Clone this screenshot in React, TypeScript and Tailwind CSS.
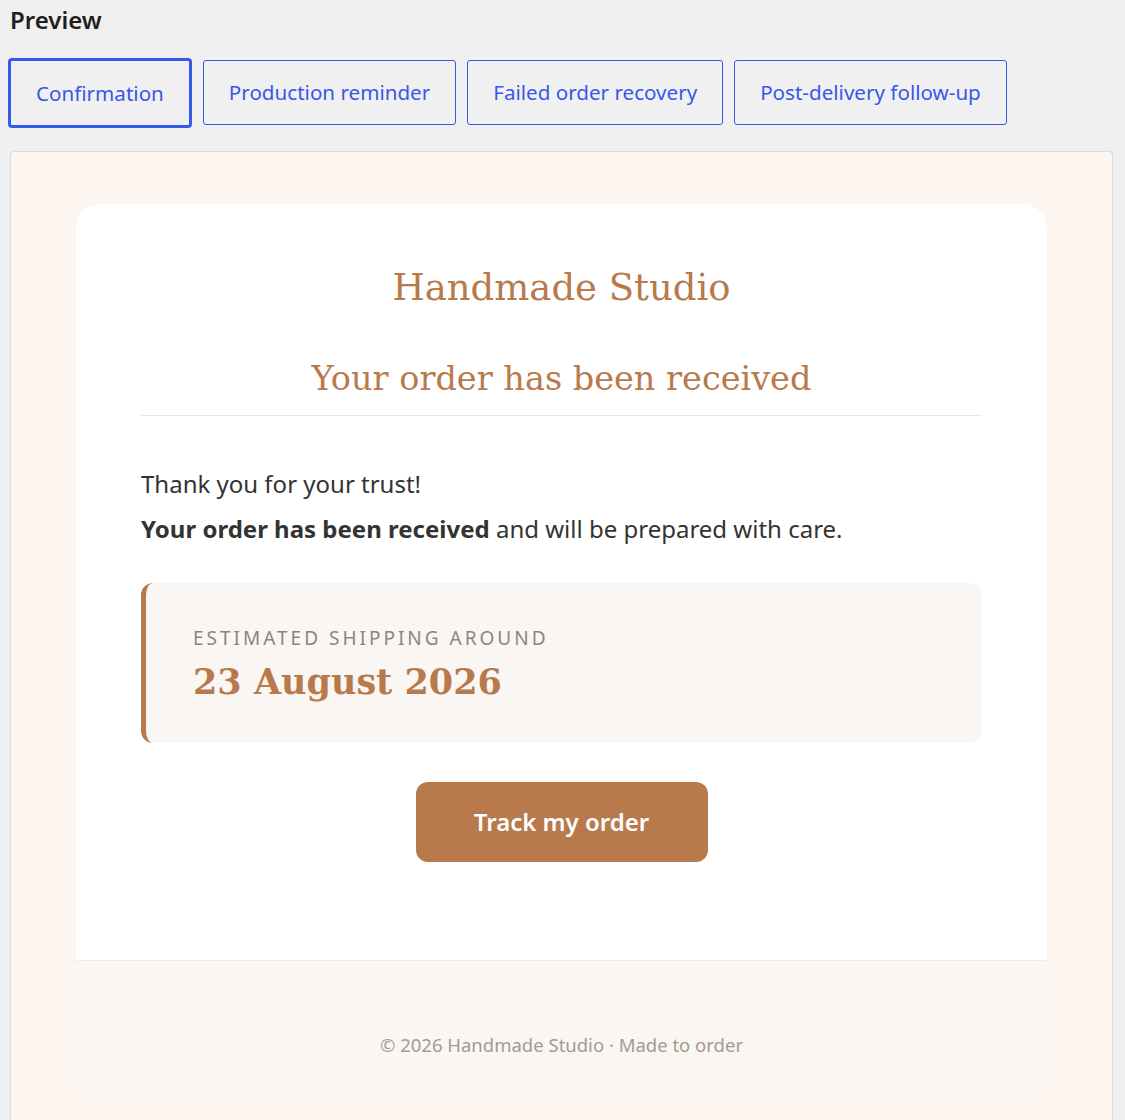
const tabs = ['Confirmation', 'Production reminder', 'Failed order recovery', 'Post-delivery follow-up'];

const sans = "font-['Noto_Sans',sans-serif]";
const serif = "font-['DejaVu_Serif','Liberation_Serif',serif]";

export default function App() {
  return (
    <div className={`min-h-[1120px] bg-[#f0f0f0] ${sans}`}>
      <h2 className="px-[10px] pt-[3px] text-[24px] leading-[34px] font-semibold text-[#1e1e1e]">Preview</h2>

      <div className="mt-[23px] flex gap-[11px] pl-[8px]">
        {tabs.map((t, i) => (
          <button
            key={t}
            className={
              i === 0
                ? 'h-[70px] -mt-[2px] px-[25px] rounded-[4px] border-[3px] border-[#3858e9] text-[20.6px] text-[#3858e9]'
                : 'h-[65px] px-[25px] rounded-[3px] border border-[#3858e9] text-[20.6px] text-[#3858e9]'
            }
          >
            {t}
          </button>
        ))}
      </div>

      <div className="ml-[10px] mr-[12px] mt-[23px] rounded-t-[4px] border border-b-0 border-[#dcdcdc] bg-[#fdf5ef] px-[65px] pt-[52px] pb-[24px]">
        <div className="overflow-hidden rounded-[24px] bg-white">
          <div className="px-[65px] pt-[56px] pb-[98px]">
            <h1 className={`${serif} text-center text-[37px] leading-[56px] text-[#b87a4b]`}>Handmade Studio</h1>
            <h2 className={`${serif} mt-[35px] text-center text-[33.5px] leading-[56px] text-[#b87a4b]`}>
              Your order has been received
            </h2>
            <div className="mt-[8px] h-px bg-[#ece8e4]" />

            <p className="mt-[51px] text-[24px] leading-[34px] text-[#333]">Thank you for your trust!</p>
            <p className="mt-[11px] text-[24px] leading-[34px] text-[#333]">
              <strong className="font-bold">Your order has been received</strong> and will be prepared with care.
            </p>

            <div className="mt-[37px] h-[160px] rounded-[12px] border-l-[5px] border-[#b87a4b] bg-[#faf6f3] pl-[47px] pt-[40px]">
              <div className="text-[19px] leading-[30px] tracking-[3px] text-[#8a8680]">ESTIMATED SHIPPING AROUND</div>
              <div className={`${serif} mt-[5px] text-[35px] leading-[48px] font-bold text-[#b87a4b]`}>23 August 2026</div>
            </div>

            <div className="mt-[39px] flex justify-center">
              <a className="flex h-[80px] w-[292px] items-center justify-center rounded-[12px] bg-[#b87a4b] text-[24px] font-semibold text-white">
                Track my order
              </a>
            </div>
          </div>

          <div className="border-t border-[#f0ebe6] bg-[#faf6f2] pt-[70px] pb-[38px] text-center text-[18.5px] leading-[28px] text-[#a49a92]">
            © 2026 Handmade Studio · Made to order
          </div>
        </div>
      </div>
    </div>
  );
}
